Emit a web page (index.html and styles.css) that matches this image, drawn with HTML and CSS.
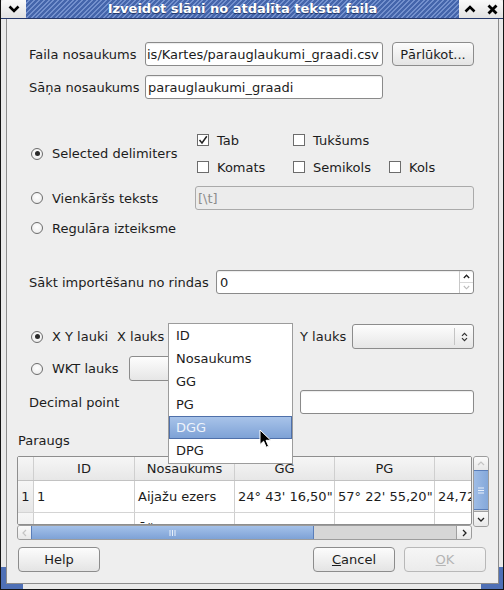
FILE: index.html
```html
<!DOCTYPE html>
<html lang="lv">
<head>
  <meta charset="UTF-8">
  <meta name="viewport" content="width=device-width, initial-scale=1.0">
  <title>Izveidot slāni no atdalīta teksta faila</title>
  <link rel="stylesheet" href="styles.css">
</head>
<body>
  <div class="window">
    <div class="titlebar">
      <div class="tb-menu">
        <svg width="12" height="8" viewBox="0 0 12 8"><path d="M1.5 1.5 L6 6 L10.5 1.5" fill="none" stroke="#000" stroke-width="2.6"/></svg>
      </div>
      <div class="tb-caption">Izveidot slāni no atdalīta teksta faila</div>
      <div class="tb-btn">
        <svg width="12" height="8" viewBox="0 0 12 8"><path d="M1.5 6.5 L6 2 L10.5 6.5" fill="none" stroke="#000" stroke-width="2.6"/></svg>
      </div>
      <div class="tb-btn">
        <svg width="11" height="11" viewBox="0 0 11 11"><path d="M1.5 1.5 L9.5 9.5 M9.5 1.5 L1.5 9.5" stroke="#000" stroke-width="2.8"/></svg>
      </div>
    </div>

    <div class="client">
      <!-- source file and layer name -->
      <div class="row indent">
        <span class="lbl name-lbl">Faila nosaukums</span>
        <div class="field path-field">is/Kartes/parauglaukumi_graadi.csv</div>
        <button class="btn browse-btn">Pārlūkot...</button>
      </div>
      <div class="row indent layer-row">
        <span class="lbl name-lbl">Sāņa nosaukums</span>
        <div class="field name-field">parauglaukumi_graadi</div>
      </div>

      <!-- delimiter choice -->
      <div class="delims opt-indent">
        <label class="opt delim-opt"><span class="radio on"></span>Selected delimiters</label>
        <div class="checks">
          <label class="chk"><span class="box"><svg width="10" height="10" viewBox="0 0 10 10"><path d="M1.5 5 L4 8 L8.8 1.2" fill="none" stroke="#222" stroke-width="1.5"/></svg></span>Tab</label>
          <label class="chk"><span class="box"></span>Tukšums</label>
          <span></span>
          <label class="chk"><span class="box"></span>Komats</label>
          <label class="chk"><span class="box"></span>Semikols</label>
          <label class="chk"><span class="box"></span>Kols</label>
        </div>
      </div>
      <div class="row opt-indent plain-row">
        <label class="opt plain-opt"><span class="radio"></span>Vienkāršs teksts</label>
        <div class="field disabled plain-field">[\t]</div>
      </div>
      <div class="row opt-indent regex-row">
        <label class="opt"><span class="radio"></span>Regulāra izteiksme</label>
      </div>

      <!-- first line -->
      <div class="row indent skip-row">
        <span class="lbl skip-lbl">Sākt importēšanu no rindas</span>
        <div class="field spin">
          <span class="spin-val">0</span>
          <span class="spin-btns">
            <span class="spin-up"><svg width="7" height="5" viewBox="0 0 7 5"><path d="M0.8 4 L3.5 1.2 L6.2 4" fill="none" stroke="#222" stroke-width="1.3"/></svg></span>
            <span class="spin-down"><svg width="7" height="5" viewBox="0 0 7 5"><path d="M0.8 1 L3.5 3.8 L6.2 1" fill="none" stroke="#bbb" stroke-width="1.1"/></svg></span>
          </span>
        </div>
      </div>

      <!-- geometry fields -->
      <div class="row tall opt-indent xy-row">
        <label class="opt xy-opt"><span class="radio on"></span>X Y lauki</label>
        <span class="lbl x-lbl">X lauks</span>
        <div class="combo-wrap">
          <div class="combo x-combo"></div>
          <ul class="popup">
            <li>ID</li>
            <li>Nosaukums</li>
            <li>GG</li>
            <li>PG</li>
            <li class="hot">DGG</li>
            <li>DPG</li>
          </ul>
          <svg class="cursor" width="13" height="20" viewBox="0 0 13 20"><path d="M1 1 L1 15.5 L4.6 12.2 L7.2 18.2 L9.6 17.2 L7 11.3 L11.8 11.3 Z" fill="#000" stroke="#fff" stroke-width="1"/></svg>
        </div>
        <span class="lbl y-lbl">Y lauks</span>
        <div class="combo y-combo">
          <span class="combo-arrows"><svg width="7" height="10" viewBox="0 0 7 10"><path d="M1 3.8 L3.5 1.3 L6 3.8 M1 6.2 L3.5 8.7 L6 6.2" fill="none" stroke="#333" stroke-width="1.2"/></svg></span>
        </div>
      </div>
      <div class="row tall opt-indent wkt-row">
        <label class="opt wkt-opt"><span class="radio"></span>WKT lauks</label>
        <div class="combo wkt-combo"></div>
      </div>
      <div class="row indent dec-row">
        <span class="lbl dec-lbl">Decimal point</span>
        <div class="field dec-field"></div>
      </div>

      <!-- sample rows -->
      <div class="sample-title">Paraugs</div>
      <div class="preview">
        <div class="viewport">
          <div class="trow thead">
            <span class="cell c-num"></span>
            <span class="cell c-id">ID</span>
            <span class="cell c-wide">Nosaukums</span>
            <span class="cell c-wide">GG</span>
            <span class="cell c-wide">PG</span>
            <span class="cell c-last"></span>
          </div>
          <div class="trow">
            <span class="cell c-num">1</span>
            <span class="cell c-id">1</span>
            <span class="cell c-wide">Aijažu ezers</span>
            <span class="cell c-wide">24° 43' 16,50"</span>
            <span class="cell c-wide">57° 22' 55,20"</span>
            <span class="cell c-last">24,7213</span>
          </div>
          <div class="trow">
            <span class="cell c-num"></span>
            <span class="cell c-id"></span>
            <span class="cell c-wide">Āžezers</span>
            <span class="cell c-wide"></span>
            <span class="cell c-wide"></span>
            <span class="cell c-last"></span>
          </div>
        </div>
        <div class="vscroll">
          <span class="sb-btn v-up"><svg width="8" height="5" viewBox="0 0 8 5"><path d="M1 4 L4 1 L7 4" fill="none" stroke="#c4c4c4" stroke-width="1.2"/></svg></span>
          <span class="thumb v-thumb"><svg width="6" height="7" viewBox="0 0 6 7"><path d="M0 1 H6 M0 3.5 H6 M0 6 H6" stroke="#e8f0fb" stroke-width="1"/></svg></span>
          <span class="track"></span>
          <span class="sb-btn v-down"><svg width="8" height="5" viewBox="0 0 8 5"><path d="M1 1 L4 4 L7 1" fill="none" stroke="#222" stroke-width="1.3"/></svg></span>
        </div>
        <div class="hscroll">
          <span class="sb-btn h-left"><svg width="5" height="8" viewBox="0 0 5 8"><path d="M4 1 L1 4 L4 7" fill="none" stroke="#c4c4c4" stroke-width="1.2"/></svg></span>
          <span class="thumb h-thumb"><svg width="7" height="6" viewBox="0 0 7 6"><path d="M1 0 V6 M3.5 0 V6 M6 0 V6" stroke="#e8f0fb" stroke-width="1"/></svg></span>
          <span class="track"></span>
          <span class="sb-btn h-right"><svg width="5" height="8" viewBox="0 0 5 8"><path d="M1 1 L4 4 L1 7" fill="none" stroke="#222" stroke-width="1.3"/></svg></span>
        </div>
      </div>

      <div class="actions">
        <button class="btn">Help</button>
        <div class="actions-right">
          <button class="btn"><u>C</u>ancel</button>
          <button class="btn" disabled><u>O</u>K</button>
        </div>
      </div>
    </div>
  </div>
</body>
</html>
```

FILE: styles.css
```css
body {
  margin: 0;
  font-family: "DejaVu Sans", sans-serif;
  font-size: 13px;
  color: #1c1c1c;
  background: #fff;
}

/* window decoration */
.window {
  width: 504px;
  height: 590px;
  box-sizing: border-box;
  border: 1px solid #141414;
  border-top: 0;
  display: flex;
  flex-direction: column;
  background:
    linear-gradient(#4f70b6, #4f70b6) left bottom / 5px 22px no-repeat,
    linear-gradient(#4f70b6, #4f70b6) left bottom / 22px 5px no-repeat,
    linear-gradient(#4f70b6, #4f70b6) right bottom / 5px 22px no-repeat,
    linear-gradient(#4f70b6, #4f70b6) right bottom / 22px 5px no-repeat,
    #e9e9e9;
}
.titlebar {
  height: 19px;
  box-sizing: border-box;
  display: flex;
  border-bottom: 1px solid #25386a;
  border-radius: 4px 4px 0 0;
  overflow: hidden;
}
.tb-menu, .tb-btn {
  width: 25px;
  display: flex;
  align-items: center;
  justify-content: center;
  background: linear-gradient(#fafafa, #e2e2e2);
}
.tb-btn {
  width: 22px;
}
.tb-caption {
  flex: 1;
  color: #fff;
  font-weight: bold;
  text-align: center;
  line-height: 18px;
  text-shadow: 0 1px 1px #1e3160;
  background: repeating-linear-gradient(135deg, #4465ab 0, #4465ab 2px, #7390cd 2px, #7390cd 3.4px);
}
.client {
  flex: 1;
  margin: 0 4px 5px 5px;
  padding: 23px 0 0 10px;
  border: 1px solid #8c8c8c;
  border-top: 0;
  background: #eeeeee;
}

/* generic rows */
.row {
  display: flex;
  align-items: center;
  height: 24px;
}
.row.tall {
  height: 25px;
}
.indent {
  padding-left: 12px;
}
.opt-indent {
  padding-left: 14px;
}
.lbl {
  white-space: nowrap;
}
.layer-row { margin-top: 9px; }
.plain-row { margin-top: 7px; }
.regex-row { margin-top: 6px; }
.skip-row { margin-top: 30px; }
.xy-row { margin-top: 30px; }
.wkt-row { margin-top: 7px; }
.dec-row { margin-top: 9px; }

.name-lbl { width: 116px; }
.skip-lbl { width: 187px; }
.dec-lbl { width: 271px; }
.x-lbl { width: 51px; }
.y-lbl { width: 52px; margin-left: 7px; }

/* widgets */
.field {
  box-sizing: border-box;
  flex: none;
  height: 24px;
  display: flex;
  align-items: center;
  padding: 0 2px;
  background: #fff;
  border: 1px solid #8a8a8a;
  border-radius: 3px;
  box-shadow: inset 0 1px 1px rgba(0, 0, 0, 0.08);
  white-space: nowrap;
  overflow: hidden;
}
.field.disabled {
  background: #ececec;
  border-color: #aaaaaa;
  color: #8c8c8c;
  box-shadow: none;
}
.path-field {
  width: 238px;
  padding-left: 1px;
}
.name-field { width: 238px; }
.plain-field { width: 279px; }
.dec-field { width: 174px; }

.spin {
  width: 258px;
  padding: 0 0 0 3px;
}
.spin-val {
  flex: 1;
}
.spin-btns {
  width: 13px;
  height: 100%;
  display: flex;
  flex-direction: column;
  border-left: 1px solid #c8c8c8;
}
.spin-up, .spin-down {
  flex: 1;
  display: flex;
  align-items: center;
  justify-content: center;
}
.spin-up {
  border-bottom: 1px solid #d8d8d8;
}

.btn {
  box-sizing: border-box;
  flex: none;
  height: 25px;
  width: 82px;
  padding: 0;
  font: inherit;
  color: #1c1c1c;
  background: linear-gradient(#fcfcfc, #e4e4e4);
  border: 1px solid #8c8c8c;
  border-radius: 4px;
}
.btn:disabled {
  color: #b4b4b4;
  border-color: #b8b8b8;
  background: linear-gradient(#f6f6f6, #ebebeb);
}
.browse-btn {
  height: 24px;
  margin-left: 9px;
}

.combo {
  box-sizing: border-box;
  flex: none;
  height: 25px;
  border: 1px solid #8c8c8c;
  border-radius: 3px;
  background: linear-gradient(#fdfdfd, #e6e6e6);
  display: flex;
  justify-content: flex-end;
}
.x-combo { width: 125px; }
.y-combo { width: 122px; }
.wkt-combo { width: 161px; }
.combo-arrows {
  width: 18px;
  margin: 3px 0;
  border-left: 1px solid #c4c4c4;
  display: flex;
  align-items: center;
  justify-content: center;
}

.opt {
  display: flex;
  align-items: center;
  gap: 9px;
  white-space: nowrap;
}
.radio {
  box-sizing: border-box;
  flex: none;
  width: 12px;
  height: 12px;
  border: 1px solid #6c6c6c;
  border-radius: 50%;
  background: radial-gradient(circle at 50% 40%, #fff, #e8e8e8);
  display: flex;
  align-items: center;
  justify-content: center;
}
.radio.on::after {
  content: "";
  width: 5px;
  height: 5px;
  border-radius: 50%;
  background: #2a2a2a;
}
.xy-opt { width: 86px; }
.wkt-opt { width: 98px; }
.plain-opt { width: 164px; }
.delim-opt { width: 166px; }

.delims {
  margin-top: 29px;
  display: flex;
  align-items: center;
}
.checks {
  display: grid;
  grid-template-columns: 96px 96px 96px;
  grid-auto-rows: 24px;
  row-gap: 3px;
}
.chk {
  display: flex;
  align-items: center;
  gap: 8px;
}
.box {
  box-sizing: border-box;
  width: 12px;
  height: 12px;
  border: 1px solid #6c6c6c;
  background: #fff;
  display: flex;
  align-items: center;
  justify-content: center;
}

/* drop-down list of the X field */
.combo-wrap {
  position: relative;
}
.popup {
  position: absolute;
  top: -1px;
  left: 0;
  width: 125px;
  margin: 0;
  padding: 0;
  list-style: none;
  box-sizing: border-box;
  height: 141px;
  background: #fff;
  border: 1px solid #9c9c9c;
  z-index: 2;
}
.popup li {
  height: 23px;
  line-height: 23px;
  padding-left: 7px;
}
.popup li.hot {
  box-sizing: border-box;
  color: #eef3fb;
  background: linear-gradient(#a8c3e9, #7ea2d6);
  border: 1px solid #4f70aa;
  padding-left: 6px;
  line-height: 21px;
}
.cursor {
  position: absolute;
  left: 91px;
  top: 105px;
  z-index: 3;
}

/* sample table */
.sample-title {
  margin-top: 18px;
  height: 18px;
  line-height: 18px;
  padding-left: 1px;
}
.preview {
  margin-top: 6px;
  display: grid;
  grid-template-columns: 455px 16px;
  grid-template-rows: 69px 15px;
  column-gap: 1px;
}
.viewport {
  grid-column: 1;
  grid-row: 1;
  box-sizing: border-box;
  border: 1px solid #8e8e8e;
  border-radius: 2px;
  background: #fff;
  overflow: hidden;
}
.trow {
  display: flex;
  height: 31px;
  border-bottom: 1px solid #d4d4d4;
  white-space: nowrap;
}
.thead {
  height: 23px;
  border-bottom-color: #c2c2c2;
  background: linear-gradient(#f6f6f6, #e7e7e7);
}
.cell {
  box-sizing: border-box;
  flex: none;
  display: flex;
  align-items: center;
  padding-left: 3px;
  border-right: 1px solid #cfcfcf;
  overflow: hidden;
}
.thead .cell {
  justify-content: center;
  padding-left: 0;
}
.c-num {
  width: 16px;
  justify-content: center;
  padding-left: 0;
  background: linear-gradient(#f6f6f6, #e7e7e7);
}
.c-id { width: 101px; }
.c-wide { width: 100px; }
.c-last { width: 60px; border-right: 0; }

.vscroll, .hscroll {
  box-sizing: border-box;
  display: flex;
  border: 1px solid #9c9c9c;
  border-radius: 3px;
  background: #d6d6d6;
  overflow: hidden;
}
.vscroll {
  grid-column: 2;
  grid-row: 1 / span 2;
  height: 71px;
  flex-direction: column;
}
.hscroll {
  grid-column: 1;
  grid-row: 2;
}
.sb-btn {
  flex: none;
  display: flex;
  align-items: center;
  justify-content: center;
  background: linear-gradient(#fafafa, #e8e8e8);
}
.v-up { height: 13px; }
.v-down {
  height: 14px;
  border-top: 1px solid #a0a0a0;
}
.h-left { width: 13px; }
.h-right {
  width: 14px;
  border-left: 1px solid #a0a0a0;
}
.thumb {
  flex: none;
  display: flex;
  align-items: center;
  justify-content: center;
  box-sizing: border-box;
  border: 1px solid #5a7eb9;
  background: linear-gradient(90deg, #9ebce6, #84a8da);
}
.v-thumb {
  height: 40px;
  margin: 0 -1px;
}
.h-thumb {
  width: 283px;
  margin: -1px 0;
  background: linear-gradient(#a4c1e9, #7ea2d6);
}
.track {
  flex: 1;
}

/* dialog buttons */
.actions {
  margin-top: 7px;
  padding: 0 12px 0 1px;
  display: flex;
  justify-content: space-between;
}
.actions-right {
  display: flex;
  gap: 9px;
}
```
